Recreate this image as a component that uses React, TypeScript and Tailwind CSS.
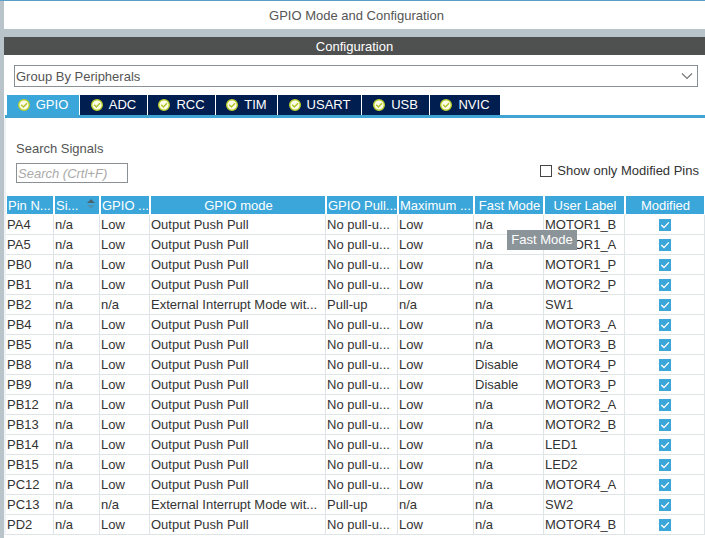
import React, { useState } from "react";

type Tab = { name: string; width: string };

const TABS: Tab[] = [
  { name: "GPIO", width: "w-[72px]" },
  { name: "ADC", width: "w-[67px]" },
  { name: "RCC", width: "w-[67px]" },
  { name: "TIM", width: "w-[61px]" },
  { name: "USART", width: "w-[83px]" },
  { name: "USB", width: "w-[67px]" },
  { name: "NVIC", width: "w-[70px]" },
];

const COLUMNS = [
  { title: "Pin N...", width: "w-[48px]", align: "text-left" },
  { title: "Si...", width: "w-[46px]", align: "text-left" },
  { title: "GPIO ...", width: "w-[50px]", align: "text-left" },
  { title: "GPIO mode", width: "", align: "text-center" },
  { title: "GPIO Pull...", width: "w-[72px]", align: "text-left" },
  { title: "Maximum ...", width: "w-[76px]", align: "text-left" },
  { title: "Fast Mode", width: "w-[70px]", align: "text-center" },
  { title: "User Label", width: "w-[81px]", align: "text-center" },
  { title: "Modified", width: "w-[80px]", align: "text-center" },
];

const PP = "Output Push Pull";
const EXT = "External Interrupt Mode wit...";
const NO = "No pull-u...";

const ROWS: string[][] = [
  ["PA4", "n/a", "Low", PP, NO, "Low", "n/a", "MOTOR1_B"],
  ["PA5", "n/a", "Low", PP, NO, "Low", "n/a", "MOTOR1_A"],
  ["PB0", "n/a", "Low", PP, NO, "Low", "n/a", "MOTOR1_P"],
  ["PB1", "n/a", "Low", PP, NO, "Low", "n/a", "MOTOR2_P"],
  ["PB2", "n/a", "n/a", EXT, "Pull-up", "n/a", "n/a", "SW1"],
  ["PB4", "n/a", "Low", PP, NO, "Low", "n/a", "MOTOR3_A"],
  ["PB5", "n/a", "Low", PP, NO, "Low", "n/a", "MOTOR3_B"],
  ["PB8", "n/a", "Low", PP, NO, "Low", "Disable", "MOTOR4_P"],
  ["PB9", "n/a", "Low", PP, NO, "Low", "Disable", "MOTOR3_P"],
  ["PB12", "n/a", "Low", PP, NO, "Low", "n/a", "MOTOR2_A"],
  ["PB13", "n/a", "Low", PP, NO, "Low", "n/a", "MOTOR2_B"],
  ["PB14", "n/a", "Low", PP, NO, "Low", "n/a", "LED1"],
  ["PB15", "n/a", "Low", PP, NO, "Low", "n/a", "LED2"],
  ["PC12", "n/a", "Low", PP, NO, "Low", "n/a", "MOTOR4_A"],
  ["PC13", "n/a", "n/a", EXT, "Pull-up", "n/a", "n/a", "SW2"],
  ["PD2", "n/a", "Low", PP, NO, "Low", "n/a", "MOTOR4_B"],
];

function StatusIcon() {
  return (
    <svg viewBox="0 0 12 12" className="size-3 shrink-0" aria-hidden="true">
      <circle cx="6" cy="6" r="5.3" fill="#fbfde8" stroke="#bccf2a" strokeWidth="1.4" />
      <path d="M3.2 5.8 L5.4 8 L9 4.2" fill="none" stroke="#b4c32c" strokeWidth="1.5" />
    </svg>
  );
}

function ModifiedBox({ pin }: { pin: string }) {
  const [on, setOn] = useState(true);
  return (
    <label className="mx-auto grid size-3 *:col-start-1 *:row-start-1">
      <input
        type="checkbox"
        aria-label={`${pin} modified`}
        checked={on}
        onChange={() => setOn(!on)}
        className="peer size-3 appearance-none border border-[#3aa6da] bg-white checked:bg-[#3aa6da]"
      />
      <svg viewBox="0 0 12 12" className="pointer-events-none invisible size-3 peer-checked:visible" aria-hidden="true">
        <path d="M2.3 6 L5 8.6 L9.8 3.4" fill="none" stroke="#fff" strokeWidth="1.4" />
      </svg>
    </label>
  );
}

export default function App() {
  const [active, setActive] = useState("GPIO");
  return (
    <div className="min-h-screen border-t border-[#5a9fc8] bg-[#b9c4ca] pl-1 font-['Liberation_Sans',Arial,sans-serif] text-[13px] leading-4 text-[#333]">
      <header className="flex h-7 items-center justify-center bg-white pt-0.5 pl-1 text-[#555]">
        <h1>GPIO Mode and Configuration</h1>
      </header>

      <main className="mt-2 min-h-[calc(100vh-37px)] bg-white">
        <h2 className="flex h-[18px] items-center justify-center bg-[#4f5150] pt-0.5 text-white">Configuration</h2>

        <div className="mt-[10px] mr-[7px] ml-[10px] grid h-[22px] items-center border border-[#8b9094] *:col-start-1 *:row-start-1">
          <select aria-label="Grouping" className="h-full w-full appearance-none bg-white pt-0.5 pl-[1px] text-[#555] outline-none">
            <option>Group By Peripherals</option>
          </select>
          <svg viewBox="0 0 12 8" className="pointer-events-none mr-1 h-2 w-3 justify-self-end" aria-hidden="true">
            <path d="M1 1.5 L6 6.5 L11 1.5" fill="none" stroke="#777" strokeWidth="1.2" />
          </svg>
        </div>

        <div role="tablist" className="mt-2 ml-px flex gap-px border-b-[3px] border-[#3fa4d3] pl-0.5">
          {TABS.map((tab) => (
            <button
              key={tab.name}
              role="tab"
              aria-selected={active === tab.name}
              onClick={() => setActive(tab.name)}
              className={`flex h-5 items-center justify-center gap-1.5 text-white ${tab.width} ${
                active === tab.name ? "bg-[#3aa6da]" : "bg-[#001e50]"
              }`}
            >
              <StatusIcon />
              {tab.name}
            </button>
          ))}
        </div>

        <section className="border-l-2 border-[#eef2f4]">
          <div className="flex items-end justify-between pt-[23px] pr-1.5 pb-[13px] pl-[10px]">
            <div className="flex flex-col gap-1.5">
              <label htmlFor="search" className="text-[#555]">
                Search Signals
              </label>
              <input
                id="search"
                type="text"
                placeholder="Search (Crtl+F)"
                className="h-5 w-28 border border-[#8b9094] px-px outline-none placeholder:text-[#aaa] placeholder:italic"
              />
            </div>
            <label className="mb-1 flex items-center gap-[5px]">
              <input type="checkbox" className="size-3 appearance-none border border-[#444] bg-white checked:bg-[#3aa6da]" />
              Show only Modified Pins
            </label>
          </div>

          <table className="w-full table-fixed border-separate border-spacing-0 whitespace-nowrap">
            <thead>
              <tr>
                {COLUMNS.map((c) => (
                  <th
                    key={c.title}
                    scope="col"
                    className={`h-[19px] border-r border-b border-white p-0 font-normal text-white ${c.width} ${c.align}`}
                  >
                    <div className="relative ml-px h-[18px] bg-[#3aa6da] pl-px leading-5">
                      {c.title}
                      {c.title === "Si..." && (
                        <svg viewBox="0 0 8 10" className="absolute top-[3px] right-1 h-[10px] w-2" aria-hidden="true">
                          <path d="M0 4 L4 0 L8 4 Z" fill="#4b6470" />
                          <path d="M0 6 L8 6 L4 10 Z" fill="#4b93b5" />
                        </svg>
                      )}
                      {c.title === "Fast Mode" && (
                        <div role="tooltip" className="absolute top-[34px] left-8 z-10 h-5 w-[70px] bg-[#8b9499] text-center leading-5">
                          Fast Mode
                        </div>
                      )}
                    </div>
                  </th>
                ))}
              </tr>
            </thead>
            <tbody>
              {ROWS.map((row) => (
                <tr key={row[0]}>
                  {row.map((cell, i) => (
                    <td key={i} className="h-5 border-r border-b border-[#dfe4e7] p-0 pl-px leading-[18px]">
                      {cell}
                    </td>
                  ))}
                  <td className="h-5 border-r border-b border-[#dfe4e7] p-0">
                    <ModifiedBox pin={row[0]} />
                  </td>
                </tr>
              ))}
            </tbody>
          </table>
        </section>
      </main>
    </div>
  );
}
